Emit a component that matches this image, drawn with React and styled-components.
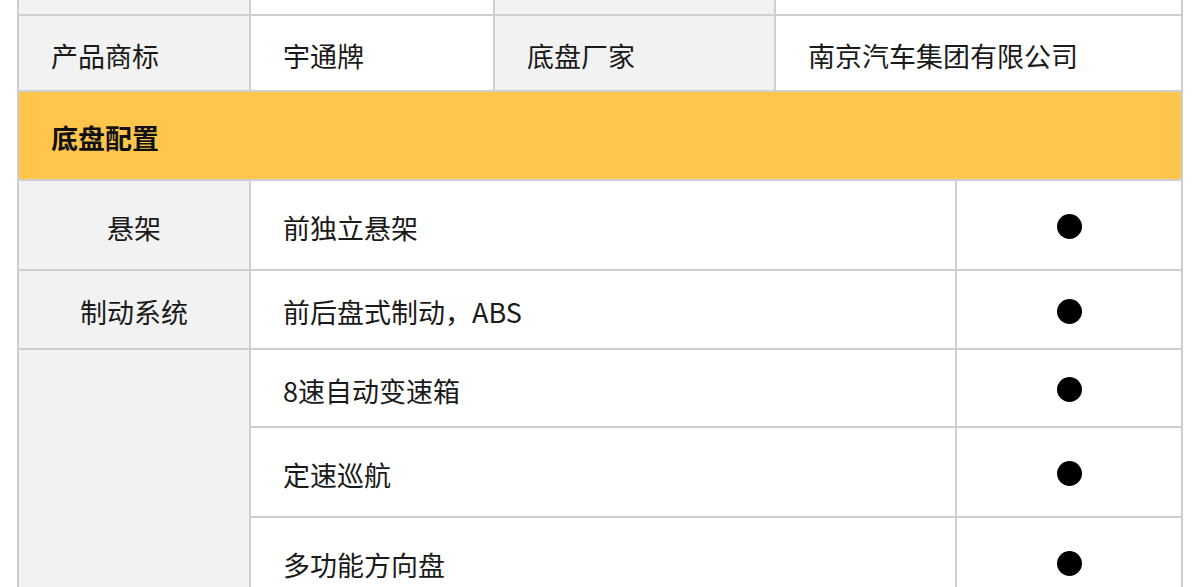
import { Fragment } from "react";
import styled, { createGlobalStyle, css } from "styled-components";

const GlobalStyle = createGlobalStyle`
  html, body {
    margin: 0;
    padding: 0;
    background: #ffffff;
  }
  body {
    font-family: "Noto Sans CJK SC", "Noto Sans", sans-serif;
    color: #1a1a1a;
  }
`;

const Page = styled.div`
  padding-left: 17px;
  width: 1166px;
`;

const SpecGrid = styled.div`
  display: grid;
  grid-template-columns: 230px 242px 279px 179px 224px;
  grid-template-rows: 14px 74px 87px 88px 77px 76px 88px 88px;
  gap: 2px;
  padding: 0 2px 2px;
  background: #cfcfcf;
`;

const Cell = styled.div`
  display: flex;
  align-items: center;
  padding: 4px 32px 0;
  font-size: 27px;
  line-height: 1;
  background: ${(p) => (p.$label ? "#f2f2f2" : "#ffffff")};
  ${(p) => p.$center && css`justify-content: center;`}
  ${(p) => p.$span && css`grid-column: span ${p.$span};`}
  ${(p) => p.$rows && css`grid-row: span ${p.$rows};`}
`;

const SectionHead = styled.div`
  grid-column: 1 / -1;
  display: flex;
  align-items: center;
  padding: 4px 32px 0;
  background: #ffc64b;
  font-size: 27px;
  font-weight: 700;
  color: #111;
`;

const Dot = styled.span`
  width: 25px;
  height: 25px;
  border-radius: 50%;
  background: #000;
  display: block;
  margin-top: -1px;
`;

const topRows = [
  ["", "", "", ""],
  ["产品商标", "宇通牌", "底盘厂家", "南京汽车集团有限公司"],
];

const chassis = [
  { label: "悬架", item: "前独立悬架" },
  { label: "制动系统", item: "前后盘式制动，ABS" },
  { label: "", item: "8速自动变速箱", rows: 3 },
  { item: "定速巡航" },
  { item: "多功能方向盘" },
];

function App() {
  return (
    <>
      <GlobalStyle />
      <Page>
        <SpecGrid>
          {topRows.map((r, i) => (
            <Fragment key={`t${i}`}>
              <Cell $label>{r[0]}</Cell>
              <Cell>{r[1]}</Cell>
              <Cell $label>{r[2]}</Cell>
              <Cell $span={2}>{r[3]}</Cell>
            </Fragment>
          ))}
          <SectionHead>底盘配置</SectionHead>
          {chassis.map((row, i) => (
            <Fragment key={`c${i}`}>
              {row.label !== undefined && (
                <Cell $label $center $rows={row.rows}>
                  {row.label}
                </Cell>
              )}
              <Cell $span={3}>{row.item}</Cell>
              <Cell $center>
                <Dot />
              </Cell>
            </Fragment>
          ))}
        </SpecGrid>
      </Page>
    </>
  );
}

export default App;
